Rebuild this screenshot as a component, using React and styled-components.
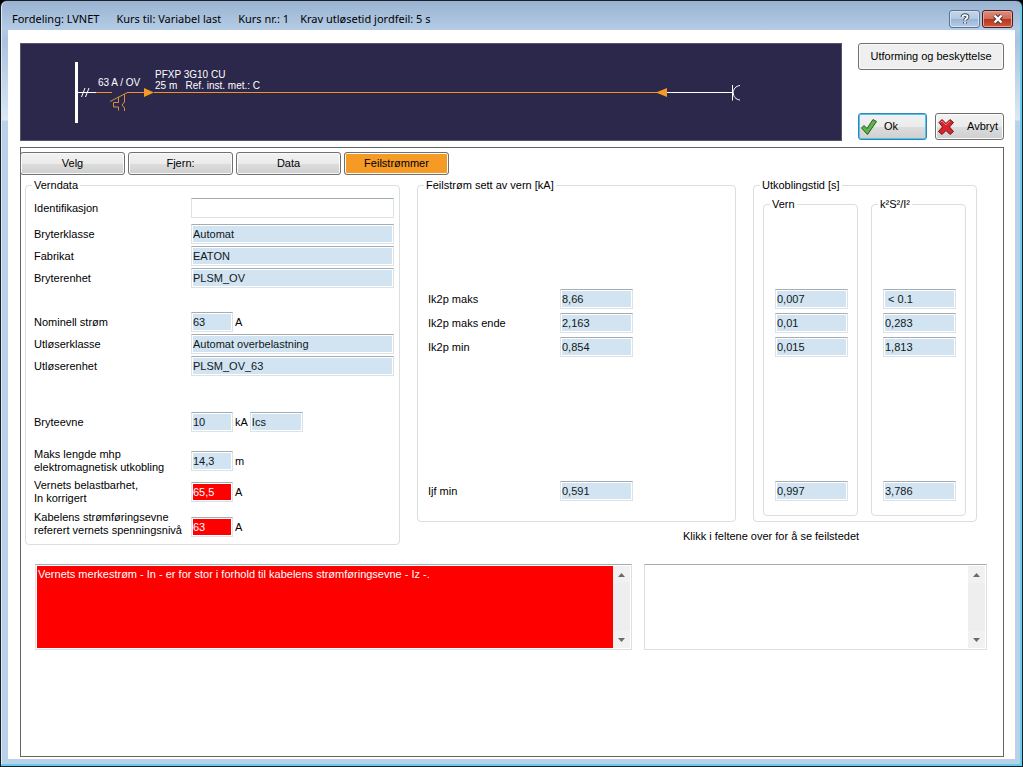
import React from 'react';
import styled, { createGlobalStyle } from 'styled-components';

const GlobalStyle = createGlobalStyle`
  * {
    box-sizing: border-box;
  }

  body {
    margin: 0;
    background-color: #000;
    color: #000;
    font-family: 'Liberation Sans', Arial, sans-serif;
    font-size: 11px;
    line-height: 13px;
  }

  button, input, textarea {
    font: inherit;
    color: inherit;
  }
`;

const Window = styled.div`
  min-height: 100vh;
  display: flex;
  flex-direction: column;
  border: 1px solid #1b1f26;
  border-radius: 7px 7px 0 0;
  box-shadow: inset -2px -2px 0 #63cdec, inset 1px 0 0 #dcebf8;
  background: linear-gradient(#98b3d1 0, #b4cbe5 28px, #a9c3e0 40px, #dbe8f5 119px, #b9d1ea 120px);
  padding: 0 7px 7px 7px;
`;

const TitleBar = styled.header`
  height: 29px;
  display: flex;
  align-items: center;
  justify-content: space-between;
  padding: 6px 2px 0 4px;
`;

const Title = styled.h1`
  display: flex;
  gap: 17px;
  margin: 0;
  font-family: 'Noto Sans', 'Open Sans', sans-serif;
  font-size: 11px;
  font-weight: normal;
  line-height: 16px;
`;

const TitleGroup = styled.span`
  display: flex;
  gap: 11px;
`;

const TitleButtons = styled.div`
  display: flex;
  gap: 2px;
`;

const TitleButton = styled.button`
  width: 31px;
  height: 18px;
  padding: 0;
  display: flex;
  align-items: center;
  justify-content: center;
  border: 1px solid ${props => props.$close ? '#4b1a1d' : '#5c7492'};
  border-radius: 3px;
  box-shadow: inset 0 0 0 1px ${props => props.$close ? '#e3a69b' : '#d3e1f0'};
  background: ${props => props.$close
    ? 'linear-gradient(#dd8f80 0, #cf6a56 50%, #b7341c 50%, #d0563c 100%)'
    : 'linear-gradient(#c3d5e9 0, #b2c8e1 50%, #98b4d3 50%, #b5cce6 100%)'};
`;

const Client = styled.main`
  flex: 1;
  display: flex;
  flex-direction: column;
  background-color: #fff;
  padding: 13px 11px 2px 12px;
`;

const Top = styled.div`
  display: grid;
  grid-template-columns: 1fr 146px;
  column-gap: 16px;
`;

const Diagram = styled.div`
  height: 98px;
  background-color: #2b284b;
  border: 1px solid #56566a;

  svg {
    display: block;
  }

  text {
    font-size: 10px;
    fill: #fff;
    white-space: pre;
  }
`;

const Actions = styled.div`
  display: flex;
  flex-direction: column;
  justify-content: space-between;
  padding-bottom: 1px;
`;

const ActionRow = styled.div`
  display: grid;
  grid-template-columns: 1fr 1fr;
  gap: 8px;
`;

const Button = styled.button`
  height: 27px;
  display: flex;
  align-items: center;
  justify-content: ${props => props.$icon ? 'flex-start' : 'center'};
  gap: ${props => props.$gap || '0'};
  padding: 0 2px;
  white-space: nowrap;
  border: 1px solid ${props => props.$focused ? '#3c7fb1' : '#707070'};
  border-radius: 3px;
  box-shadow: inset 0 0 0 1px ${props => props.$focused ? '#46c8ee' : '#fbfbfb'};
  background: linear-gradient(#f2f2f2 0, #ebebeb 50%, #dddddd 50%, #cfcfcf 100%);
`;

const FlatButton = styled(Button)`
  background: #efefef;
`;

const Panel = styled.section`
  flex: 1;
  margin-top: 6px;
  padding-top: 4px;
  border: 1px solid #646464;
`;

const Tabs = styled.nav`
  display: flex;
  gap: 3px;
  margin-left: -1px;
`;

const Tab = styled(Button)`
  width: 105px;
  height: 23px;
  ${props => props.$active && 'background: #f49a25;'}
`;

const Groups = styled.div`
  display: grid;
  grid-template-columns: 375fr 319fr 224fr;
  grid-template-rows: auto 1fr;
  column-gap: 17px;
  padding: 4px 26px 0 4px;
`;

const Group = styled.fieldset`
  min-width: 0;
  margin: 0;
  padding: 0;
  border: 1px solid #d9dede;
  border-radius: 4px;
  ${props => props.$tall && 'grid-row: span 2;'}
`;

const Legend = styled.legend`
  margin-left: 6px;
  padding: 0 2px;
`;

const VernBody = styled.div`
  padding: 6px 5px 7px 8px;
`;

const Row = styled.div`
  display: grid;
  grid-template-columns: 157px 1fr;
  align-items: ${props => props.$end ? 'end' : 'center'};
  margin-top: ${props => props.$space || 0}px;
`;

const Label = styled.label`
  white-space: pre-line;
`;

const Inputs = styled.div`
  display: flex;
  align-items: center;
  gap: 2px;
`;

const Field = styled.input`
  width: ${props => props.$width || '100%'};
  height: 20px;
  padding: 0 1px;
  border: 1px solid #dce3e6;
  border-top-color: #a3adb3;
  outline: 0;
  box-shadow: inset 0 0 0 1px #fff;
  background-color: ${props => props.$error ? '#f00' : props.readOnly ? '#d2e3f1' : '#fff'};
  color: ${props => props.$error ? '#fff' : '#101820'};
`;

const FaultBody = styled.div`
  display: flex;
  flex-direction: column;
  gap: 4px;
  padding: 97px 10px 20px 10px;
`;

const FaultRow = styled.div`
  display: grid;
  grid-template-columns: 132px 73px;
  align-items: center;

  &:last-child {
    margin-top: 120px;
  }
`;

const TimeBody = styled.div`
  display: grid;
  grid-template-columns: 1fr 1fr;
  gap: 13px;
  padding: 6px 10px 5px 9px;
`;

const TimeColumn = styled.div`
  display: flex;
  flex-direction: column;
  gap: 4px;
  padding: 78px 9px 14px 11px;

  input:last-child {
    margin-top: 120px;
  }
`;

const Hint = styled.p`
  grid-column: 2 / 4;
  margin: 8px 0 0 266px;
  white-space: nowrap;
`;

const Memos = styled.div`
  display: grid;
  grid-template-columns: 597fr 343fr;
  gap: 12px;
  margin-top: 19px;
  padding: 0 16px 0 14px;
`;

const Memo = styled.div`
  height: 86px;
  display: flex;
  padding: 1px;
  border: 1px solid #dce0e2;
  border-top-color: #a3adb3;
`;

const MemoText = styled.textarea`
  flex: 1;
  min-width: 0;
  padding: 2px 1px;
  border: 0;
  outline: 0;
  resize: none;
  overflow: hidden;
  background-color: ${props => props.$error ? '#f00' : '#fff'};
  color: ${props => props.$error ? '#fff' : '#000'};
`;

const ScrollBar = styled.div`
  width: 17px;
  display: flex;
  flex-direction: column;
  justify-content: space-between;
  background-color: #eeeeee;
`;

const ScrollButton = styled.button`
  width: 17px;
  height: 17px;
  padding: 0;
  border: 0;
  display: flex;
  align-items: center;
  justify-content: center;
  background-color: #f1f1f1;
`;

const vern = [
  { id: 'ident', label: 'Identifikasjon', value: '', editable: true },
  { id: 'bryterklasse', label: 'Bryterklasse', value: 'Automat', space: 6 },
  { id: 'fabrikat', label: 'Fabrikat', value: 'EATON', space: 2 },
  { id: 'bryterenhet', label: 'Bryterenhet', value: 'PLSM_OV', space: 2 },
  { id: 'nominell', label: 'Nominell strøm', value: '63', unit: 'A', space: 24 },
  { id: 'utloserklasse', label: 'Utløserklasse', value: 'Automat overbelastning', space: 2 },
  { id: 'utloserenhet', label: 'Utløserenhet', value: 'PLSM_OV_63', space: 2 },
  { id: 'bryteevne', label: 'Bryteevne', value: '10', unit: 'kA', extra: 'Ics', space: 36 },
  { id: 'lengde', label: 'Maks lengde mhp\nelektromagnetisk utkobling', value: '14,3', unit: 'm', space: 16 },
  { id: 'belastbarhet', label: 'Vernets belastbarhet,\nIn korrigert', value: '65,5', unit: 'A', error: true, space: 5 },
  { id: 'stromforing', label: 'Kabelens strømføringsevne\nreferert vernets spenningsnivå', value: '63', unit: 'A', error: true, end: true, space: 6 },
];

const faults = [
  { id: 'ik2pmaks', label: 'Ik2p maks', current: '8,66', vern: '0,007', cable: ' < 0.1' },
  { id: 'ik2pende', label: 'Ik2p maks ende', current: '2,163', vern: '0,01', cable: '0,283' },
  { id: 'ik2pmin', label: 'Ik2p min', current: '0,854', vern: '0,015', cable: '1,813' },
  { id: 'ijfmin', label: 'Ijf min', current: '0,591', vern: '0,997', cable: '3,786' },
];

function Circuit() {
  return (
    <svg width='100%' height='96' viewBox='21 44 820 96' preserveAspectRatio='xMinYMid meet'>
      <rect x='75' y='62' width='3' height='61' fill='#fff' />
      <path d='M78 92.5H96M81.5 97l3.5-9M85.5 97l3.5-9' stroke='#fff' fill='none' />
      <path d='M96 92.5H112M127 92.5H145M154 92.5H657' stroke='#f0922b' fill='none' />
      <path d='M110 101.5L127.5 92.5M118.5 97v5.5h-5v4.5h5v3.5M124.5 94v8l-2.5 3l2.5 3v3' stroke='#d8913a' fill='none' />
      <path d='M144 88l10 4.5l-10 4.5zM667 88l-11 4.5l11 4.5z' fill='#f59a23' />
      <path d='M667 92.5H732M732.5 85v15.5M740 85.5c-9 1-9 13.5 0 14.5' stroke='#fff' fill='none' />
      <text x='98' y='86'>63 A / OV</text>
      <text x='155' y='78'>PFXP 3G10 CU</text>
      <text x='155' y='89'>25 m   Ref. inst. met.: C</text>
    </svg>
  );
}

function ScrollArrows() {
  return (
    <ScrollBar>
      <ScrollButton aria-label='Rull opp'>
        <svg width='7' height='4'><path d='M0 4L3.5 0L7 4z' fill='#6b6b6b' /></svg>
      </ScrollButton>
      <ScrollButton aria-label='Rull ned'>
        <svg width='7' height='4'><path d='M0 0L3.5 4L7 0z' fill='#6b6b6b' /></svg>
      </ScrollButton>
    </ScrollBar>
  );
}

function App() {
  return (
    <>
      <GlobalStyle />
      <Window>
        <TitleBar>
          <Title>
            <span>Fordeling: LVNET</span>
            <span>Kurs til: Variabel last</span>
            <TitleGroup>
              <span>Kurs nr.: 1</span>
              <span>Krav utløsetid jordfeil: 5 s</span>
            </TitleGroup>
          </Title>
          <TitleButtons>
            <TitleButton aria-label='Hjelp'>
              <svg width='10' height='12' viewBox='0 0 10 12' fill='none'>
                <path d='M2.5 4C2.5 1.5 7.5 1.5 7.5 4C7.5 5.5 5 5.5 5 7.5M5 9v1.5' stroke='#3f4c5c' strokeWidth='3.8' />
                <path d='M2.5 4C2.5 1.5 7.5 1.5 7.5 4C7.5 5.5 5 5.5 5 7.5M5 9v1.5' stroke='#fff' strokeWidth='1.8' />
              </svg>
            </TitleButton>
            <TitleButton $close aria-label='Lukk'>
              <svg width='12' height='10' viewBox='0 0 12 10'>
                <path d='M2.5 1.5L9.5 8.5M9.5 1.5L2.5 8.5' stroke='#54383c' strokeWidth='4.4' />
                <path d='M2.5 1.5L9.5 8.5M9.5 1.5L2.5 8.5' stroke='#fff' strokeWidth='2.4' />
              </svg>
            </TitleButton>
          </TitleButtons>
        </TitleBar>
        <Client>
          <Top>
            <Diagram><Circuit /></Diagram>
            <Actions>
              <FlatButton>Utforming og beskyttelse</FlatButton>
              <ActionRow>
                <Button $icon $focused $gap='7px'>
                  <svg width='16' height='16' viewBox='0 0 16 16'>
                    <path d='M0.5 9L3 6.5l3 3L12 0.5L15.5 2.5L6.5 15.5z' fill='#5bb54a' stroke='#28591f' strokeLinejoin='round' />
                  </svg>
                  Ok
                </Button>
                <Button $icon $gap='13px'>
                  <svg width='16' height='16' viewBox='0 0 16 16'>
                    <path d='M1 3.5L4 0.5L8 4.5L12 0.5L15.5 3.5L11.5 8L15.5 12.5L12 15.5L8 11.5L4 15.5L0.5 12.5L4.5 8z' fill='#d8232c' stroke='#6e1519' strokeLinejoin='round' />
                    <path d='M2.5 3.5L4 2L8 6L12 2' fill='none' stroke='#ee7f80' />
                  </svg>
                  Avbryt
                </Button>
              </ActionRow>
            </Actions>
          </Top>
          <Panel>
            <Tabs>
              <Tab>Velg</Tab>
              <Tab>Fjern:</Tab>
              <Tab>Data</Tab>
              <Tab $active>Feilstrømmer</Tab>
            </Tabs>
            <Groups>
              <Group $tall>
                <Legend>Verndata</Legend>
                <VernBody>
                  {vern.map(row => (
                    <Row key={row.id} $space={row.space} $end={row.end}>
                      <Label htmlFor={row.id}>{row.label}</Label>
                      <Inputs>
                        <Field
                          id={row.id}
                          defaultValue={row.value}
                          readOnly={!row.editable}
                          $error={row.error}
                          $width={row.unit && '42px'} />
                        {row.unit && <span>{row.unit}</span>}
                        {row.extra && <Field aria-label='Type bryteevne' defaultValue={row.extra} readOnly $width='53px' />}
                      </Inputs>
                    </Row>
                  ))}
                </VernBody>
              </Group>
              <Group>
                <Legend>Feilstrøm sett av vern [kA]</Legend>
                <FaultBody>
                  {faults.map(fault => (
                    <FaultRow key={fault.id}>
                      <Label htmlFor={fault.id}>{fault.label}</Label>
                      <Field id={fault.id} defaultValue={fault.current} readOnly />
                    </FaultRow>
                  ))}
                </FaultBody>
              </Group>
              <Group>
                <Legend>Utkoblingstid [s]</Legend>
                <TimeBody>
                  <Group>
                    <Legend>Vern</Legend>
                    <TimeColumn>
                      {faults.map(fault => (
                        <Field key={fault.id} aria-label={'Vern ' + fault.label} defaultValue={fault.vern} readOnly />
                      ))}
                    </TimeColumn>
                  </Group>
                  <Group>
                    <Legend>k²S²/I²</Legend>
                    <TimeColumn>
                      {faults.map(fault => (
                        <Field key={fault.id} aria-label={'k²S²/I² ' + fault.label} defaultValue={fault.cable} readOnly />
                      ))}
                    </TimeColumn>
                  </Group>
                </TimeBody>
              </Group>
              <Hint>Klikk i feltene over for å se feilstedet</Hint>
            </Groups>
            <Memos>
              <Memo>
                <MemoText
                  $error
                  readOnly
                  aria-label='Feilmeldinger'
                  defaultValue='Vernets merkestrøm - In - er for stor i forhold til kabelens strømføringsevne - Iz -.' />
                <ScrollArrows />
              </Memo>
              <Memo>
                <MemoText readOnly aria-label='Merknader' />
                <ScrollArrows />
              </Memo>
            </Memos>
          </Panel>
        </Client>
      </Window>
    </>
  );
}

export default App;
